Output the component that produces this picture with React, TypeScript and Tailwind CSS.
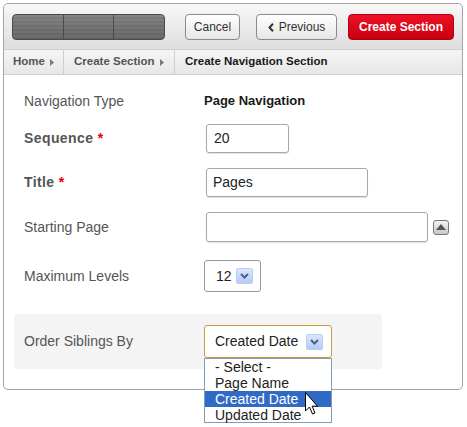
import React from "react";

const font = { fontFamily: '"Liberation Sans", Arial, sans-serif' };

function Tri() {
  return (
    <svg width="4" height="7" viewBox="0 0 4 7" className="ml-[5px]">
      <path d="M0 0 L4 3.5 L0 7 Z" fill="#7a7a7a" />
    </svg>
  );
}

function BlueArrow() {
  return (
    <div className="w-[17px] h-[16px] rounded-[2px] bg-gradient-to-b from-[#dbe7ff] to-[#b3cbf6] border border-[#b8cdf0] flex items-center justify-center">
      <svg width="9" height="6" viewBox="0 0 9 6">
        <path d="M1 1 L4.5 4.5 L8 1" stroke="#4d6185" strokeWidth="2" fill="none" />
      </svg>
    </div>
  );
}

export default function App() {
  return (
    <div className="w-[467px] h-[427px] bg-white pt-[3px] pl-[3px] text-[#333]" style={font}>
      <div className="w-[460px] h-[387px] border border-[#a3a3a3] rounded-[5px] flex flex-col">
        {/* toolbar */}
        <div className="h-[45px] rounded-t-[5px] bg-gradient-to-b from-[#f8f8f8] to-[#dedede] flex items-start pt-[10px] pl-[8px]">
          <div className="flex h-[26px] w-[153px] rounded-[4px] border border-[#4a4a4a] overflow-hidden bg-[repeating-linear-gradient(180deg,#7c7c7c_0px,#7c7c7c_2px,#727272_2px,#727272_4px)]">
            <div className="flex-1 border-r border-[#4a4a4a] bg-gradient-to-b from-[rgba(255,255,255,0.08)] to-[rgba(0,0,0,0.12)]" />
            <div className="flex-1 border-r border-[#4a4a4a] bg-gradient-to-b from-[rgba(255,255,255,0.08)] to-[rgba(0,0,0,0.12)]" />
            <div className="flex-1 bg-gradient-to-b from-[rgba(255,255,255,0.08)] to-[rgba(0,0,0,0.12)]" />
          </div>
          <div className="ml-[20px] h-[26px] w-[55px] rounded-[4px] border border-[#8a8a8a] bg-gradient-to-b from-[#ffffff] to-[#e6e6e6] flex items-center justify-center text-[12px] text-[#333]">
            Cancel
          </div>
          <div className="ml-[16px] h-[26px] w-[81px] rounded-[4px] border border-[#8a8a8a] bg-gradient-to-b from-[#ffffff] to-[#e6e6e6] flex items-center justify-center gap-[5px] text-[12px] text-[#333]">
            <svg width="6" height="9" viewBox="0 0 6 9">
              <path d="M5 0.8 L1.5 4.5 L5 8.2" stroke="#333" strokeWidth="2" fill="none" />
            </svg>
            <span>Previous</span>
          </div>
          <div className="ml-[11px] h-[26px] w-[106px] rounded-[4px] border border-[#b00012] bg-gradient-to-b from-[#ef1024] to-[#c9000f] flex items-center justify-center text-[12px] font-bold text-white">
            Create Section
          </div>
        </div>
        {/* breadcrumb */}
        <div className="h-[26px] border-t border-b border-[#cfcfcf] bg-gradient-to-b from-[#f5f5f5] to-[#e7e7e7] flex items-stretch text-[11.5px] font-bold">
          <div className="w-[60px] border-r border-[#cfcfcf] flex items-center pl-[9px] text-[#555]">
            Home<Tri />
          </div>
          <div className="w-[111px] border-r border-[#cfcfcf] flex items-center pl-[10px] text-[#555]">
            Create Section<Tri />
          </div>
          <div className="flex items-center pl-[10px] text-[#1a1a1a]">Create Navigation Section</div>
        </div>
        {/* form */}
        <div className="flex flex-col pl-[10px] text-[14px]">
          <div className="h-[30px] mt-[11px] flex items-center">
            <div className="w-[190px] pl-[10px] text-[#555]">Navigation Type</div>
            <div className="text-[13px] font-bold text-[#1a1a1a]">Page Navigation</div>
          </div>
          <div className="h-[29px] mt-[8px] flex items-center">
            <div className="w-[190px] pl-[10px] font-bold text-[#555] tracking-[0.4px]">
              Sequence <span className="text-[#e00000]">*</span>
            </div>
            <div className="ml-[2px] w-[83px] h-[29px] border border-[#a8a8a8] rounded-[3px] shadow-[0_1px_1px_rgba(0,0,0,0.12)] flex items-center pl-[7px] text-[#222]">
              20
            </div>
          </div>
          <div className="h-[29px] mt-[15px] flex items-center">
            <div className="w-[190px] pl-[10px] font-bold text-[#555] tracking-[0.4px]">
              Title <span className="text-[#e00000]">*</span>
            </div>
            <div className="ml-[2px] w-[162px] h-[29px] border border-[#a8a8a8] rounded-[3px] shadow-[0_1px_1px_rgba(0,0,0,0.12)] flex items-center pl-[6px] text-[#222]">
              Pages
            </div>
          </div>
          <div className="h-[30px] mt-[15px] flex items-center">
            <div className="w-[190px] pl-[10px] text-[#555]">Starting Page</div>
            <div className="ml-[2px] w-[222px] h-[30px] border border-[#a8a8a8] rounded-[3px] shadow-[0_1px_1px_rgba(0,0,0,0.12)]" />
            <div className="ml-[5px] w-[16px] h-[15px] rounded-[3px] border border-[#777] bg-gradient-to-b from-[#f4f4f4] to-[#c8c8c8] flex items-center justify-center">
              <svg width="10" height="6" viewBox="0 0 10 6">
                <path d="M0 6 L5 0 L10 6 Z" fill="#555" />
              </svg>
            </div>
          </div>
          <div className="h-[32px] mt-[18px] flex items-center">
            <div className="w-[190px] pl-[10px] text-[#555]">Maximum Levels</div>
            <div className="w-[57px] h-[32px] border border-[#9a9a9a] rounded-[3px] flex items-center pl-[11px] gap-[4px] text-[#222]">
              <span>12</span>
              <BlueArrow />
            </div>
          </div>
          <div className="h-[55px] mt-[22px] w-[368px] bg-[#f4f4f4] rounded-[3px] flex items-center">
            <div className="w-[190px] pl-[10px] text-[#555]">Order Siblings By</div>
            <div className="relative">
              <div className="w-[128px] h-[33px] border-[1.5px] border-[#cc9a3c] rounded-[3px] bg-white flex items-center pl-[10px] text-[#222]">
                <span>Created Date</span>
                <div className="ml-[8px]">
                  <BlueArrow />
                </div>
              </div>
              <div className="absolute left-0 top-[33px] w-[128px] h-[65px] border border-[#7f9db9] bg-white flex flex-col text-[14px] leading-[16px] text-[#222]">
                <div className="h-[16px] pl-[10px]">- Select -</div>
                <div className="h-[16px] pl-[10px]">Page Name</div>
                <div className="h-[16px] pl-[10px] bg-[#316ac5] text-white">Created Date</div>
                <div className="h-[16px] pl-[10px]">Updated Date</div>
              </div>
              <svg className="absolute left-[101px] top-[67px]" width="14" height="27" viewBox="0 0 14 27">
                <path
                  d="M0.5 0.5 L0.5 19 L4.5 15 L7.5 22 L10 21 L7.2 14.2 L12.5 14.2 Z"
                  fill="#fff"
                  stroke="#000"
                  strokeWidth="1"
                  strokeLinejoin="miter"
                />
              </svg>
            </div>
          </div>
        </div>
      </div>
    </div>
  );
}
